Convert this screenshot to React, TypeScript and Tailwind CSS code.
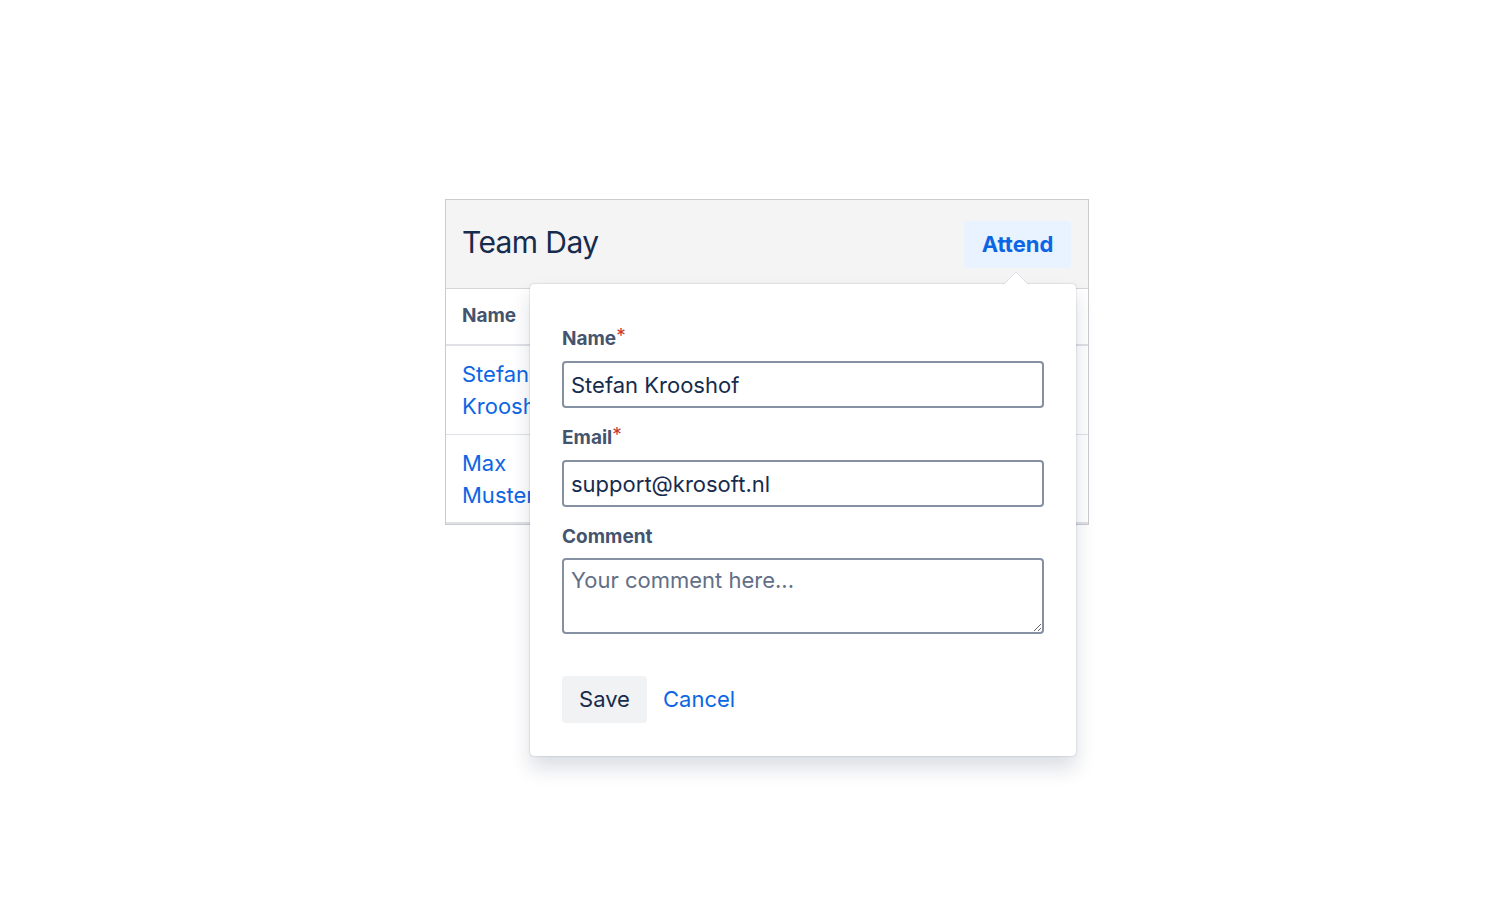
import React from "react";

export default function App() {
  return (
    <div
      className="min-h-[900px] w-full bg-white pl-[445px] pt-[199px]"
      style={{ fontFamily: "Inter, 'Noto Sans', sans-serif" }}
    >
      <div className="relative w-[644px] border border-[#c9cbcf] bg-white">
        {/* header */}
        <div className="flex h-[89px] items-center justify-between border-b border-[#d4d6d9] bg-[#f4f4f4] pl-[16px] pr-[17px]">
          <h1 className="mb-[5px] text-[30px] font-normal leading-none tracking-[-0.6px] text-[#172b4d]">Team Day</h1>
          <button className="h-[47px] w-[107px] rounded-[4px] bg-[#e9f2ff] text-[22px] font-bold text-[#0c66e4]">
            Attend
          </button>
        </div>
        {/* table */}
        <div className="flex h-[57px] items-center border-b-2 border-[#dfe1e6] pl-[16px]">
          <span className="text-[19px] font-bold text-[#44546f]">Name</span>
        </div>
        <div className="flex h-[89px] flex-col justify-center border-b border-[#dfe1e6] pl-[16px] text-[22px] leading-[32px] text-[#0c66e4]">
          <span>Stefan</span>
          <span>Krooshof</span>
        </div>
        <div className="flex h-[89px] flex-col justify-center border-b-2 border-[#dfe1e6] pl-[16px] text-[22px] leading-[32px] text-[#0c66e4]">
          <span>Max</span>
          <span>Mustermann</span>
        </div>

        {/* popover */}
        <div className="absolute left-[84px] top-[84px] w-[546px] rounded-[4px] bg-white px-[32px] pb-[33px] pt-[43px] shadow-[0_12px_20px_rgba(9,30,66,0.15),0_0_1.5px_rgba(9,30,66,0.35)]">
          <svg
            className="absolute right-[47px] top-[-13px]"
            width="26"
            height="14"
            viewBox="0 0 26 14"
          >
            <path d="M0 14 L13 1 L26 14 Z" fill="#ffffff" />
            <path d="M0.5 13.5 L13 1 L25.5 13.5" fill="none" stroke="#dcdfe4" strokeWidth="1" />
          </svg>
          <label className="block text-[19px] font-bold leading-[24px] text-[#44546f]">
            Name<span className="relative top-[-3px] text-[19px] font-normal text-[#c9372c]">*</span>
          </label>
          <input
            className="mt-[10px] block h-[47px] w-full rounded-[4px] border-2 border-[#8590a2] px-[7px] text-[22px] text-[#172b4d] outline-none"
            defaultValue="Stefan Krooshof"
            style={{ fontFamily: "Inter, 'Noto Sans', sans-serif" }}
          />
          <label className="mt-[18px] block text-[19px] font-bold leading-[24px] text-[#44546f]">
            Email<span className="relative top-[-3px] text-[19px] font-normal text-[#c9372c]">*</span>
          </label>
          <input
            className="mt-[10px] block h-[47px] w-full rounded-[4px] border-2 border-[#8590a2] px-[7px] text-[22px] text-[#172b4d] outline-none"
            defaultValue="support@krosoft.nl"
            style={{ fontFamily: "Inter, 'Noto Sans', sans-serif" }}
          />
          <label className="mt-[18px] block text-[19px] font-bold leading-[24px] text-[#44546f]">
            Comment
          </label>
          <textarea
            className="mt-[9px] block h-[76px] w-full rounded-[4px] border-2 border-[#8590a2] px-[7px] py-[6px] text-[22px] leading-[28px] text-[#172b4d] outline-none placeholder:text-[#626f86]"
            placeholder="Your comment here..."
            style={{ fontFamily: "Inter, 'Noto Sans', sans-serif" }}
          />
          <div className="mt-[42px] flex items-center gap-[16px]">
            <button className="h-[47px] w-[85px] rounded-[4px] bg-[#f1f2f4] text-[22px] text-[#172b4d]">Save</button>
            <button className="text-[22px] text-[#0c66e4]">Cancel</button>
          </div>
        </div>
      </div>
    </div>
  );
}
